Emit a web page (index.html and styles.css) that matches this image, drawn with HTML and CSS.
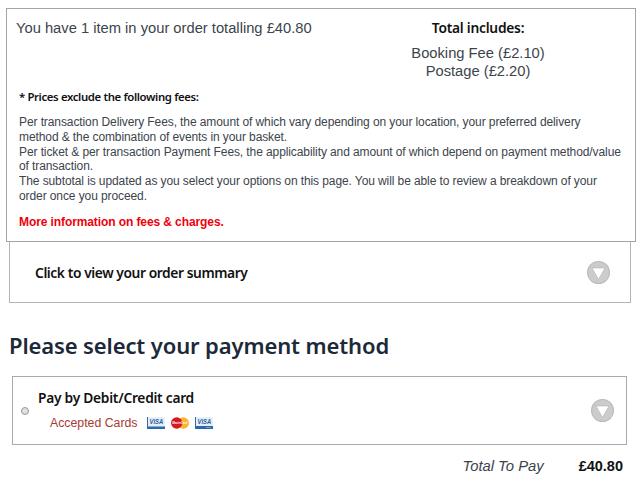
FILE: index.html
```
<!DOCTYPE html>
<html lang="en">

<head>
    <meta charset="UTF-8">
    <title>Payment</title>
    <link rel="stylesheet" href="styles.css">
</head>

<body>
    <main>
        <section class="basket">
            <div class="basket-top">
                <p class="basket-count">You have 1 item in your order totalling £40.80</p>
                <div class="includes">
                    <h2>Total includes:</h2>
                    <p class="booking">Booking Fee (£2.10)</p>
                    <p class="postage">Postage (£2.20)</p>
                </div>
            </div>
            <div class="fees">
                <h3>* Prices exclude the following fees:</h3>
                <p>Per transaction Delivery Fees, the amount of which vary depending on your location, your preferred delivery<br>method &amp; the combination of events in your basket.</p>
                <p>Per ticket &amp; per transaction Payment Fees, the applicability and amount of which depend on payment method/value<br>of transaction.</p>
                <p>The subtotal is updated as you select your options on this page. You will be able to review a breakdown of your<br>order once you proceed.</p>
                <a href="#">More information on fees &amp; charges.</a>
            </div>
        </section>

        <section class="order">
            <h2>Click to view your order summary</h2>
            <svg class="arrow" viewBox="0 0 22 22">
                <circle cx="11" cy="11" r="10.5" fill="#ccc" stroke="#bbb" />
                <path d="M4.7 6.6h12.6L11 17.6z" fill="#fff" stroke="#b8b8b8" stroke-width=".7" />
            </svg>
        </section>

        <h1>Please select your payment method</h1>

        <section class="payment">
            <span class="radio"></span>
            <div class="method">
                <h2>Pay by Debit/Credit card</h2>
                <div class="cards">
                    <span class="accepted">Accepted Cards</span>
                    <svg class="card" viewBox="0 0 18 12">
                        <path d="M0 0h18v12H0z" fill="#e6eef6" />
                        <path d="M0 0h1v10H0zM0 9.4h18V12H0z" fill="#2a69ad" />
                        <text x="2.6" y="7.3" textLength="13.5" lengthAdjust="spacingAndGlyphs">VISA</text>
                    </svg>
                    <svg class="card master" viewBox="0 0 18 12">
                        <circle cx="12.3" cy="6" r="5.7" fill="#fab52c" />
                        <circle cx="5.7" cy="6" r="5.7" fill="#d5191f" />
                        <text x="1.2" y="7.4" textLength="15.2" lengthAdjust="spacingAndGlyphs">MasterCard</text>
                    </svg>
                    <svg class="card" viewBox="0 0 18 12">
                        <path d="M0 0h18v12H0z" fill="#e6eef6" />
                        <path d="M0 0h1v10H0zM0 9H18V12H0z" fill="#2a69ad" />
                        <path d="M11 10h5v1h-5z" fill="#6f9ccc" />
                        <text x="2.6" y="7" textLength="13.5" lengthAdjust="spacingAndGlyphs">VISA</text>
                    </svg>
                </div>
            </div>
            <svg class="arrow" viewBox="0 0 22 22">
                <circle cx="11" cy="11" r="10.5" fill="#ccc" stroke="#bbb" />
                <path d="M4.7 6.6h12.6L11 17.6z" fill="#fff" stroke="#b8b8b8" stroke-width=".7" />
            </svg>
        </section>

        <div class="total">
            <span class="total-label">Total To Pay</span>
            <span class="total-price">£40.80</span>
        </div>
    </main>
</body>

</html>
```
FILE: styles.css
```
* {
    box-sizing: border-box;
    padding: 0;
    margin: 0;
}

body {
    font-family: "Liberation Sans", Arial, sans-serif;
    background: #fff;
    color: #3c444c;
    overflow: hidden;
}

main {
    width: 640px;
    height: 482px;
    padding: 8px 4px 0 6px;
}

h1,
h2,
h3 {
    font-family: "Noto Sans", sans-serif;
    font-weight: 600;
    color: #111;
    white-space: nowrap;
}

h2 {
    font-size: 13.8px;
    line-height: 20px;
    letter-spacing: -0.42px;
}

.basket {
    width: 630px;
    height: 234px;
    border: 1px solid #a4a4a4;
}

.basket-top {
    display: flex;
    height: 80px;
    padding: 9px 0 0 9px;
}

.basket-count {
    width: 362px;
    font-size: 14.72px;
    line-height: 20px;
    white-space: nowrap;
}

.includes {
    width: 200px;
    text-align: center;
    font-size: 14.72px;
    line-height: 18px;
}

.includes h2 {
    letter-spacing: -0.25px;
}

.booking {
    margin-top: 6px;
}

.fees {
    padding-left: 12px;
    font-size: 12px;
    line-height: 14.8px;
    letter-spacing: -0.095px;
    white-space: nowrap;
}

.fees h3 {
    font-size: 11.4px;
    line-height: 16px;
    letter-spacing: -0.38px;
    margin-bottom: 10px;
}

.fees a {
    display: block;
    margin-top: 11px;
    font-weight: bold;
    color: #f0000c;
    text-decoration: none;
}

.order {
    display: flex;
    align-items: center;
    justify-content: space-between;
    width: 622px;
    height: 61px;
    margin-left: 3px;
    padding: 1px 20px 0 25px;
    border: 1px solid #b4b4b4;
    border-top: none;
}

.arrow {
    width: 23px;
    height: 23px;
}

h1 {
    margin: 27px 0 0 3px;
    font-size: 22px;
    line-height: 30px;
    letter-spacing: -0.12px;
    color: #1c2938;
}

.payment {
    display: flex;
    align-items: center;
    width: 615px;
    height: 69px;
    margin: 16px 0 0 6px;
    padding: 0 12px 0 8px;
    border: 1px solid #aaa;
}

.radio {
    width: 8px;
    height: 8px;
    border: 1px solid #999;
    border-radius: 50%;
    background: #e0e0e0;
}

.method {
    flex: 1;
    padding-left: 9px;
}

.method h2 {
    letter-spacing: -0.28px;
}

.cards {
    display: flex;
    align-items: center;
    height: 20px;
    margin-top: 5px;
    padding: 0 0 1px 12px;
}

.accepted {
    width: 97px;
    font-size: 12.3px;
    color: #a83a36;
}

.card {
    width: 18px;
    height: 12px;
    margin-right: 6px;
    font: italic bold 6.5px "Liberation Sans", sans-serif;
    fill: #1d5ca5;
    overflow: visible;
}

.master {
    font-size: 3.5px;
    fill: #fff;
}

.total {
    display: flex;
    justify-content: flex-end;
    gap: 35px;
    padding: 11px 13px 0 0;
    font-size: 14.8px;
    line-height: 20px;
}

.total-label {
    font-style: italic;
}

.total-price {
    font-size: 14.5px;
    font-weight: bold;
    color: #111;
}
```
